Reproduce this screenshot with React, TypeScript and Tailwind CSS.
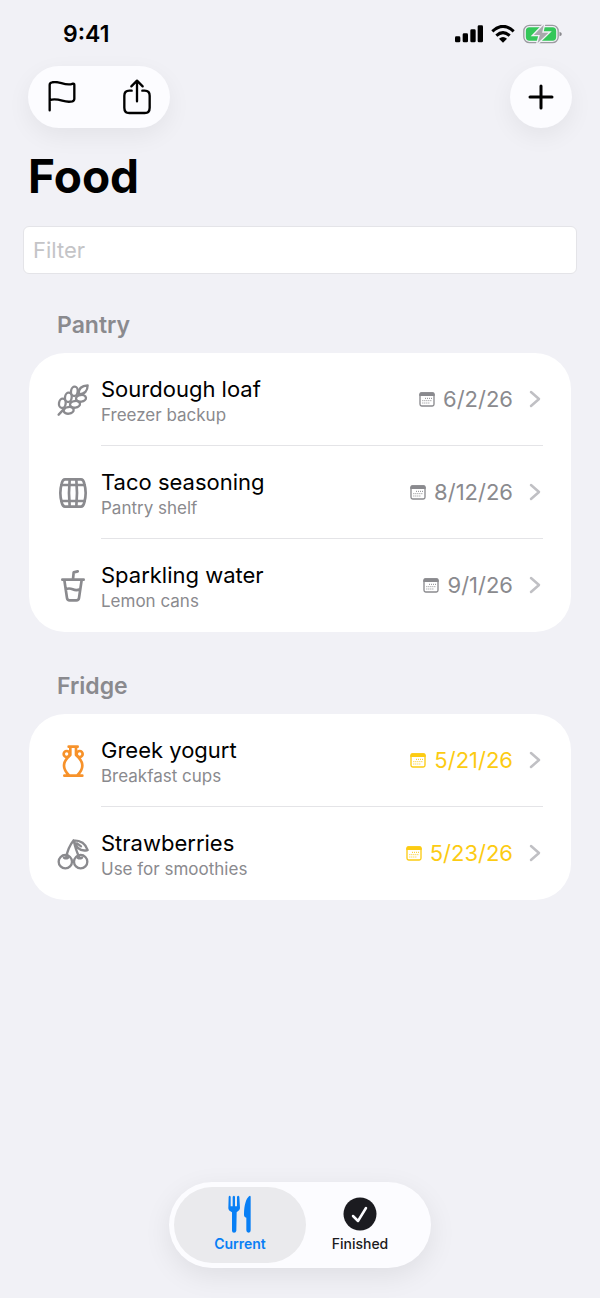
import { useState } from "react";
import type { ReactNode } from "react";

type Item = {
  name: string;
  note: string;
  date: string;
  icon: ReactNode;
  soon?: boolean;
};

const stroke = {
  viewBox: "0 0 96 96",
  fill: "none",
  stroke: "currentColor",
  strokeWidth: 8,
  strokeLinecap: "round",
  strokeLinejoin: "round",
  "aria-hidden": true,
} as const;

function WheatIcon() {
  return (
    <svg {...stroke} strokeWidth={7} className="size-8 text-[#8a8a8e]">
      <path d="M5 92L22 74" />
      <ellipse cx="16" cy="58" rx="10" ry="14" transform="rotate(8 16 58)" />
      <ellipse cx="34" cy="40" rx="10" ry="14" transform="rotate(8 34 40)" />
      <ellipse cx="52" cy="22" rx="10" ry="14" transform="rotate(8 52 22)" />
      <ellipse cx="35" cy="79" rx="15" ry="10" transform="rotate(-8 35 79)" />
      <ellipse cx="54" cy="61" rx="15" ry="10" transform="rotate(-8 54 61)" />
      <ellipse cx="72" cy="43" rx="15" ry="10" transform="rotate(-8 72 43)" />
      <path d="M65 31C64 13 74 5 92 4C92 20 83 31 65 31Z" />
    </svg>
  );
}

function BarrelIcon() {
  return (
    <svg {...stroke} className="size-8 text-[#8a8a8e]">
      <path d="M24 7H72Q79 7 82 20Q90 48 82 76Q79 89 72 89H24Q17 89 14 76Q6 48 14 20Q17 7 24 7Z" />
      <path d="M13 24H83M13 72H83M38 8Q34 48 38 88M58 8Q62 48 58 88" />
    </svg>
  );
}

function CupIcon() {
  return (
    <svg {...stroke} className="size-8 text-[#8a8a8e]">
      <path d="M62 4L50 7L48 28M16 29H80M22 30L30 84Q31 91 38 91H58Q65 91 66 84L74 30M26 58Q36 53 47 58Q58 63 69 58" />
    </svg>
  );
}

function VaseIcon() {
  return (
    <svg {...stroke} className="size-8 text-[#f7922a]">
      <path d="M35 5H62M40 8V30C32 37 21 46 21 62C21 76 29 84 37 92M57 8V30C65 37 76 46 76 62C76 76 68 84 60 92M22 92H76" />
      <circle cx="29" cy="27" r="9" />
      <circle cx="68" cy="27" r="9" />
    </svg>
  );
}

function CherryIcon() {
  return (
    <svg {...stroke} strokeWidth={7} className="size-8 text-[#8a8a8e]">
      <circle cx="25" cy="71" r="20" />
      <circle cx="71" cy="71" r="20" />
      <path d="M27 60C30 44 38 22 50 7C54 26 60 45 68 60M50 7C70 7 86 18 92 36C73 41 58 31 50 7ZM60 16L72 25M21 59Q27 63 33 59M62 59Q68 63 75 59" />
    </svg>
  );
}

function CalendarIcon() {
  return (
    <svg viewBox="0 0 48 45" aria-hidden="true" className="w-4 h-[15px]">
      <rect x="3" y="3" width="42" height="39" rx="5" fill="none" stroke="currentColor" strokeWidth="4" />
      <path d="M1 12V7Q1 1 7 1H41Q47 1 47 7V12Z" fill="currentColor" />
      <path
        d="M18 19H40M10 26H40M10 33H32"
        stroke="currentColor"
        strokeWidth="3"
        strokeDasharray="3 3"
      />
    </svg>
  );
}

const sections: { title: string; items: Item[] }[] = [
  {
    title: "Pantry",
    items: [
      { name: "Sourdough loaf", note: "Freezer backup", date: "6/2/26", icon: <WheatIcon /> },
      { name: "Taco seasoning", note: "Pantry shelf", date: "8/12/26", icon: <BarrelIcon /> },
      { name: "Sparkling water", note: "Lemon cans", date: "9/1/26", icon: <CupIcon /> },
    ],
  },
  {
    title: "Fridge",
    items: [
      { name: "Greek yogurt", note: "Breakfast cups", date: "5/21/26", icon: <VaseIcon />, soon: true },
      { name: "Strawberries", note: "Use for smoothies", date: "5/23/26", icon: <CherryIcon />, soon: true },
    ],
  },
];

function StatusBar() {
  return (
    <div className="flex items-center justify-between pl-[63px] pr-[38px] pt-5 h-12">
      <span className="text-[23px] leading-7 font-semibold">9:41</span>
      <div className="flex items-center gap-2">
        <svg viewBox="0 0 84 54" aria-hidden="true" className="w-7 h-[18px]">
          <rect x="0" y="34" width="16" height="18" rx="4" />
          <rect x="23" y="25" width="16" height="27" rx="4" />
          <rect x="46" y="13" width="16" height="39" rx="4" />
          <rect x="68" y="1" width="16" height="51" rx="4" />
        </svg>
        <svg viewBox="0 0 72 54" aria-hidden="true" className="w-6 h-[18px]">
          <path
            d="M4 19Q36 -11 68 19M16 32Q36 14 56 32"
            fill="none"
            stroke="black"
            strokeWidth="9"
          />
          <path d="M36 53L24 41Q36 31 48 41Z" />
        </svg>
        <svg viewBox="0 0 116 60" aria-hidden="true" className="w-[39px] h-5">
          <rect x="2" y="4" width="103" height="52" rx="17" fill="none" stroke="#9b9ba0" strokeWidth="4" />
          <rect x="8" y="10" width="91" height="40" rx="11" fill="#34c759" />
          <path d="M109 23Q116 25 116 30Q116 35 109 37Z" fill="#8a8a8e" />
          <path d="M62 2L32 33H50L43 58L76 26H57Z" fill="#a8a8ac" stroke="#f1f1f6" strokeWidth="8" paintOrder="stroke" />
        </svg>
      </div>
    </div>
  );
}

function Row({ item }: { item: Item }) {
  return (
    <li className="group pl-7">
      <a href="#" className="flex items-center gap-3">
        <span className="w-8 shrink-0 flex justify-center">{item.icon}</span>
        <span className="flex-1 flex items-center mr-7 py-5 border-b border-[#e4e4e7] group-last:border-transparent">
          <span className="flex-1">
            <span className="block text-[22px] leading-8 text-black">{item.name}</span>
            <span className="block text-[17px] leading-5 text-[#8a8a8e]">{item.note}</span>
          </span>
          <span className={item.soon ? "flex items-center gap-2 text-[#fccb12]" : "flex items-center gap-2 text-[#8a8a8e]"}>
            <CalendarIcon />
            <span className="text-[22px] leading-8">{item.date}</span>
          </span>
          <svg
            viewBox="0 0 12 18"
            fill="none"
            stroke="#c0c0c4"
            strokeWidth="2.5"
            strokeLinecap="round"
            strokeLinejoin="round"
            aria-hidden="true"
            className="ml-4 mr-[2px] w-3 h-[18px]"
          >
            <path d="M2 2L10 9L2 16" />
          </svg>
        </span>
      </a>
    </li>
  );
}

export default function App() {
  const [filter, setFilter] = useState("");
  const [tab, setTab] = useState("current");

  const matches = (item: Item) =>
    item.name.toLowerCase().includes(filter.trim().toLowerCase());

  return (
    <div className="min-h-screen flex flex-col bg-[#f1f1f6] font-[Inter,sans-serif] text-black">
      <StatusBar />

      <header className="px-7 pt-[18px]">
        <div className="flex items-center justify-between">
          <div className="flex items-center h-[62px] rounded-full bg-[#fcfcff] shadow-[0_8px_24px_rgba(0,0,0,0.06)]">
            <button aria-label="Flag" className="h-full px-5">
              <svg viewBox="0 0 84 96" fill="none" stroke="black" strokeWidth="7" strokeLinecap="round" strokeLinejoin="round" className="w-7 h-8">
                <path d="M5 88V12Q5 5 12 4C36 -1 43 13 68 10L75 8Q79 7 79 12V53Q79 59 73 61C48 68 36 49 5 57" />
              </svg>
            </button>
            <button aria-label="Share" className="h-full pl-[26px] pr-[18px]">
              <svg viewBox="0 0 90 108" fill="none" stroke="black" strokeWidth="7" strokeLinecap="round" strokeLinejoin="round" className="w-[30px] h-9">
                <path d="M45 67V6M28 22L45 5L62 22M29 35H22Q7 35 7 50V86Q7 102 22 102H68Q83 102 83 86V50Q83 35 68 35H61" />
              </svg>
            </button>
          </div>
          <button
            aria-label="Add"
            className="size-[62px] flex items-center justify-center rounded-full bg-[#fcfcff] shadow-[0_8px_24px_rgba(0,0,0,0.06)]"
          >
            <svg viewBox="0 0 26 26" stroke="black" strokeWidth="3" strokeLinecap="round" className="size-[26px]">
              <path d="M13 2V24M2 13H24" />
            </svg>
          </button>
        </div>
        <h1 className="mt-5 text-[46px] leading-14 font-bold">Food</h1>
      </header>

      <div className="px-[23px] mt-[22px]">
        <input
          type="text"
          aria-label="Filter"
          placeholder="Filter"
          value={filter}
          onChange={(e) => setFilter(e.target.value)}
          className="block w-full h-12 px-[9px] rounded-md border border-[#e4e4e8] bg-white text-[22px] placeholder-[#c4c4c7] focus:outline-none"
        />
      </div>

      <main className="px-[29px] pt-[35px] flex flex-col gap-[38px]">
        {sections.map((section) => (
          <section key={section.title}>
            <h2 className="px-7 mb-3 text-[23px] leading-8 font-semibold text-[#8a8a8e]">
              {section.title}
            </h2>
            <ul className="rounded-[36px] bg-white">
              {section.items.filter(matches).map((item) => (
                <Row key={item.name} item={item} />
              ))}
            </ul>
          </section>
        ))}
      </main>

      <nav className="mt-auto mb-[30px] self-center flex p-[5px] rounded-full bg-[#fcfcff] shadow-[0_8px_28px_rgba(0,0,0,0.08)]">
        <button
          onClick={() => setTab("current")}
          className={`w-33 h-19 flex flex-col items-center rounded-full pt-2 text-[#087ff5] ${tab === "current" ? "bg-[#eaeaed]" : ""}`}
        >
          <svg viewBox="0 0 72 114" fill="currentColor" aria-hidden="true" className="w-6 h-[38px]">
            <path d="M2 5Q5 0 8 5V34H14V5Q18 0 21 5V34H27V5Q31 0 34 5L36 40Q36 47 26 52L25 107Q24 113 18 113Q12 113 12 107V52Q1 47 1 40Z" />
            <path d="M68 5V106Q68 113 62 113Q55 113 55 106V68Q47 66 48 56C49 30 54 12 63 4Q67 0 68 5Z" />
          </svg>
          <span className="text-sm leading-[22px] font-semibold">Current</span>
        </button>
        <button
          onClick={() => setTab("finished")}
          className={`-ml-3 w-33 h-19 flex flex-col items-center rounded-full pt-2 text-[#1b1b20] ${tab === "finished" ? "bg-[#eaeaed]" : ""}`}
        >
          <svg viewBox="0 0 34 34" aria-hidden="true" className="size-[38px] p-[2px]">
            <circle cx="17" cy="17" r="16.5" fill="currentColor" />
            <path d="M10 19L15 24L23 11" fill="none" stroke="#fcfcff" strokeWidth="2.5" strokeLinecap="round" strokeLinejoin="round" />
          </svg>
          <span className="text-sm leading-[22px] font-medium">Finished</span>
        </button>
      </nav>
    </div>
  );
}
